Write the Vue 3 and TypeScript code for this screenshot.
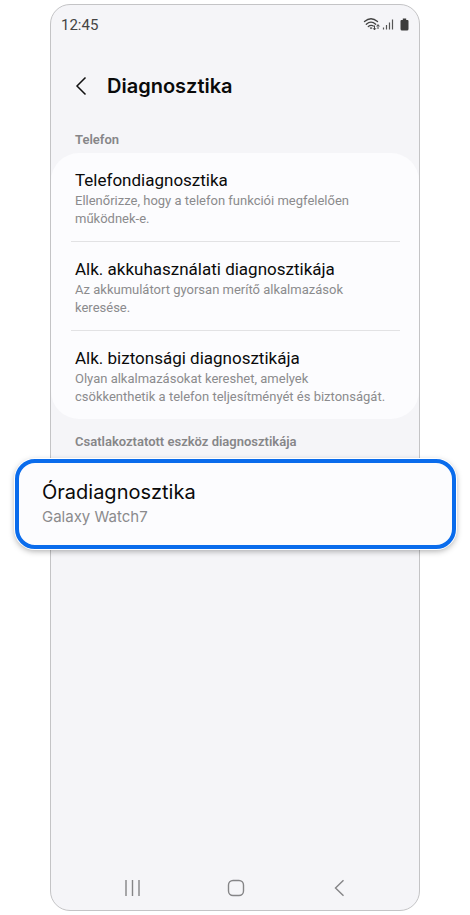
<script setup lang="ts">
interface DiagnosticItem {
  title: string
  lines: string[]
}

const time = '12:45'

const phoneItems: DiagnosticItem[] = [
  {
    title: 'Telefondiagnosztika',
    lines: ['Ellenőrizze, hogy a telefon funkciói megfelelően', 'működnek-e.'],
  },
  {
    title: 'Alk. akkuhasználati diagnosztikája',
    lines: ['Az akkumulátort gyorsan merítő alkalmazások', 'keresése.'],
  },
  {
    title: 'Alk. biztonsági diagnosztikája',
    lines: ['Olyan alkalmazásokat kereshet, amelyek', 'csökkenthetik a telefon teljesítményét és biztonságát.'],
  },
]
</script>

<template>
  <div class="page">
    <main class="phone">
      <div class="status">
        <span class="time">{{ time }}</span>
        <svg class="status-icons" width="46" height="16" viewBox="0 0 46 16" aria-hidden="true">
          <g fill="none" stroke="#444" stroke-width="1.3" stroke-linecap="round">
            <path d="M1.500 4.600Q8-1.200 14.500 4.600" />
            <path d="M3.300 7.200Q8 3 12.700 7.200" />
            <path d="M5.300 9.500Q8 7.400 10.400 9" />
          </g>
          <path d="M6.600 10.800Q8 9.800 9.400 10.800L8 12.300z" fill="#444" />
          <path d="M11.500 8.500v4.300M10 11.200l1.500 1.700 1.500-1.700M15 12V7.800M13.500 9.400l1.500-1.700 1.500 1.700" fill="none" stroke="#444" stroke-width="1" />
          <path d="M20.500 12.500v-2M23.500 12.500V8M26.500 12.500V5.500M29.500 12.500V2.500" fill="none" stroke="#555" stroke-width="1.200" />
          <path d="M39.800 1.500h3.400v1.500h1.300q1 0 1 1V12q0 1.500-1.500 1.500h-5q-1.500 0-1.500-1.500V4q0-1 1-1h1.300z" fill="#3c3c3c" />
        </svg>
      </div>

      <header class="title-bar">
        <button class="back" type="button" aria-label="Vissza">
          <svg width="12" height="20" viewBox="0 0 12 20" aria-hidden="true">
            <path d="M10.500 1.500 2 10l8.500 8.500" fill="none" stroke="#111" stroke-width="1.500" />
          </svg>
        </button>
        <h1>Diagnosztika</h1>
      </header>

      <h2 class="section">Telefon</h2>
      <ul class="card">
        <li v-for="item in phoneItems" :key="item.title">
          <button class="item" type="button">
            <span class="item-title">{{ item.title }}</span>
            <span v-for="line in item.lines" :key="line" class="item-line">{{ line }}</span>
          </button>
        </li>
      </ul>

      <h2 class="section section-device">Csatlakoztatott eszköz diagnosztikája</h2>
      <button class="callout" type="button">
        <span class="callout-title">Óradiagnosztika</span>
        <span class="callout-sub">Galaxy Watch7</span>
      </button>

      <nav class="nav">
        <button type="button" aria-label="Legutóbbiak">
          <svg width="18" height="18" viewBox="0 0 18 18" aria-hidden="true">
            <path d="M2 1v16M8.500 1v16M15 1v16" fill="none" stroke="#858587" stroke-width="1.400" />
          </svg>
        </button>
        <button type="button" aria-label="Kezdőképernyő">
          <svg width="18" height="18" viewBox="0 0 18 18" aria-hidden="true">
            <rect x="1.500" y="1.500" width="15" height="15" rx="4.500" fill="none" stroke="#858587" stroke-width="1.400" />
          </svg>
        </button>
        <button type="button" aria-label="Vissza">
          <svg width="18" height="18" viewBox="0 0 18 18" aria-hidden="true">
            <path d="M13.500 1.300 5.500 9l8 7.700" fill="none" stroke="#858587" stroke-width="1.400" />
          </svg>
        </button>
      </nav>
    </main>
  </div>
</template>

<style>
body {
  background: #fff;
}
</style>

<style scoped>
.page {
  box-sizing: border-box;
  display: flex;
  min-height: 100vh;
  padding: 4px 50px;
  font-family: Inter, Roboto, sans-serif;
}

.phone {
  box-sizing: border-box;
  display: flex;
  flex: 1;
  flex-direction: column;
  min-width: 0;
  border: 1px solid #c4c4c6;
  border-radius: 20px;
  background: #f5f5f8;
}

button {
  margin: 0;
  padding: 0;
  border: 0;
  background: none;
  font: inherit;
  text-align: left;
}

.status {
  display: flex;
  align-items: center;
  justify-content: space-between;
  height: 40px;
  padding: 0 10px;
}

.time {
  color: #444;
  font-family: Roboto, sans-serif;
  font-size: 15px;
}

.status-icons {
  display: block;
}

.title-bar {
  display: flex;
  align-items: center;
  gap: 20px;
  height: 82px;
  padding: 0 24px;
}

.back svg {
  display: block;
}

h1 {
  margin: 0;
  color: #0a0a0a;
  font-size: 20px;
  font-weight: 600;
}

.section {
  margin: 0;
  padding: 4px 24px;
  color: #868688;
  font-family: Roboto, sans-serif;
  font-size: 13px;
  font-weight: 600;
  line-height: 18px;
}

.section-device {
  padding-top: 14px;
  padding-bottom: 8px;
}

.card {
  margin: 0;
  padding: 0;
  border-radius: 28px;
  background: #fcfcfe;
  list-style: none;
}

.card li + li::before {
  display: block;
  height: 1px;
  margin: 0 19px 0 20px;
  background: #e2e2e4;
  content: '';
}

.item {
  display: flex;
  flex-direction: column;
  width: 100%;
  padding: 15px 24px 13px;
  white-space: nowrap;
}

.item-title {
  color: #0a0a0a;
  font-family: Roboto, sans-serif;
  font-size: 17px;
  line-height: 24px;
}

.item-line {
  color: #8b8b8d;
  font-family: Roboto, sans-serif;
  font-size: 13px;
  line-height: 18px;
}

.callout {
  display: flex;
  flex-direction: column;
  margin: 0 -37px 0 -36px;
  padding: 16px 23px 17px;
  border: 4px solid #0a6cec;
  border-radius: 20px;
  background: #fcfcfe;
  box-shadow: 0 0 0 1px #fff, 0 2px 6px rgba(0, 0, 0, 0.35);
}

.callout-title {
  color: #0a0a0a;
  font-size: 20px;
  line-height: 26px;
}

.callout-sub {
  color: #8b8b8d;
  font-size: 15px;
  line-height: 24px;
}

.callout-sub {
  margin-bottom: -1px;
}

.nav {
  display: flex;
  justify-content: space-between;
  margin-top: auto;
  padding: 14px 71px 13px 73px;
}

.nav svg {
  display: block;
}
</style>
